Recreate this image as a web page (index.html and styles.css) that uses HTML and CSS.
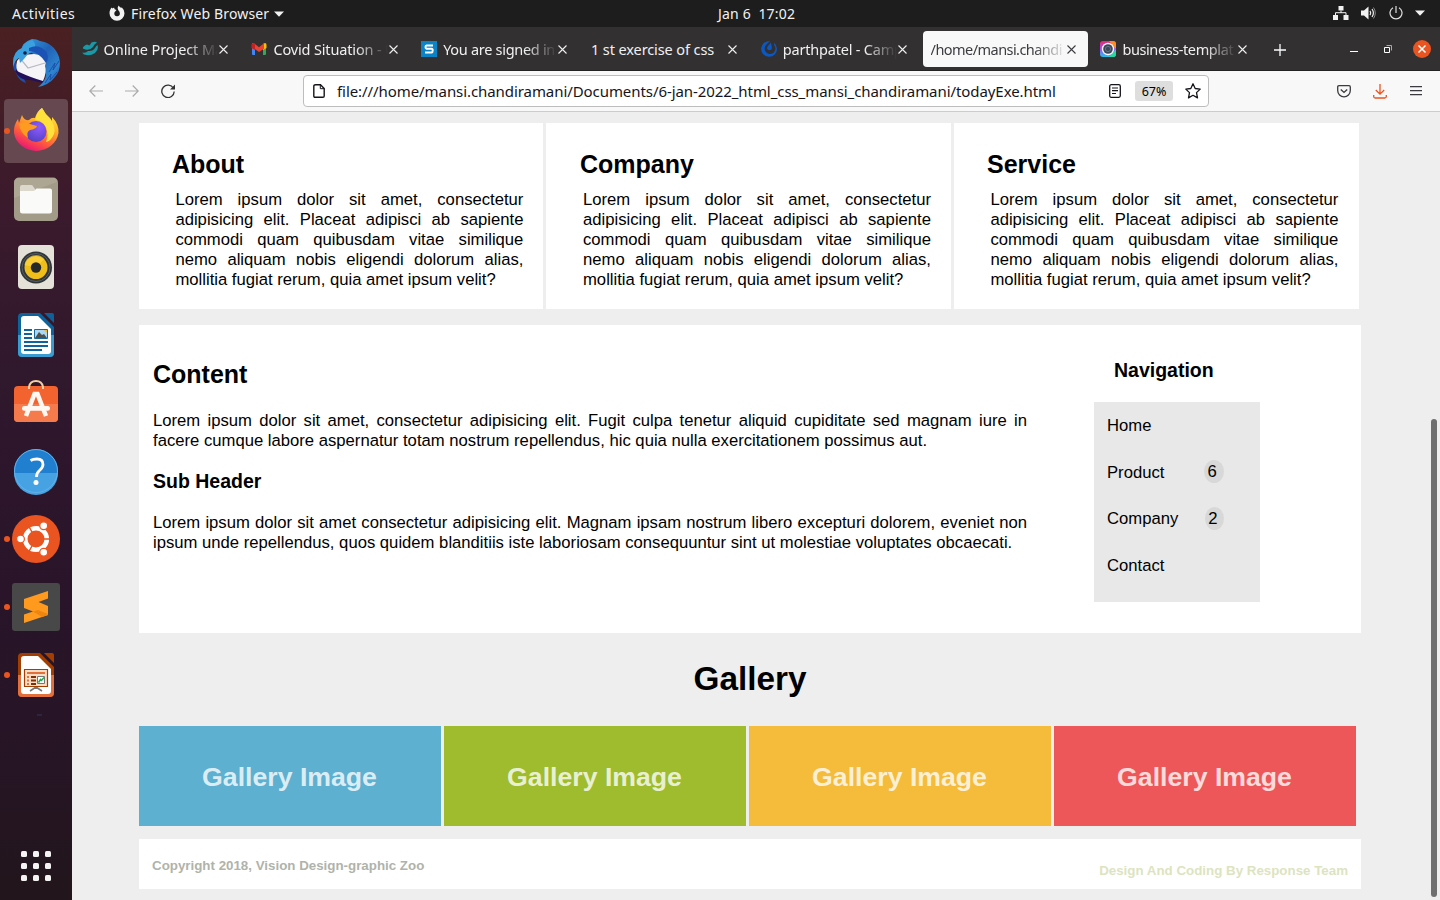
FILE: index.html
```html
<!DOCTYPE html>
<html lang="en">
<head>
<meta charset="utf-8">
<title>todayExe.html</title>
<link rel="stylesheet" href="styles.css">
</head>
<body>
<div class="desktop">
  <header class="topbar">
    <div class="topbar-left">
      <span class="t-activities">Activities</span>
      <svg class="ff-mono" width="16" height="16" viewBox="0 0 16 16"><path fill="#f2f2f2" fill-rule="evenodd" d="M1.200 4.800L2.400 2.400L3.200 3.400Q4.200 2.700 5.400 2.900Q4.900 4 6.200 4.600L7.500 4.900L6.400 6.200Q5.300 7 5.300 8.300A2.800 2.800 0 0 0 10.900 8.500Q10.900 6.500 9.300 5.200Q7.800 3.400 9.500 .6Q10.300 2 12.300 3L12.700 2.200Q15.600 4.900 15.500 8.300A7.500 7.500 0 0 1 .5 8.300Q.4 6.500 1.200 4.800Z"/></svg>
      <span class="t-app">Firefox Web Browser</span>
      <svg class="caret" width="10" height="6" viewBox="0 0 10 6"><path fill="#f2f2f2" d="M0 .5H10L5 5.700Z"/></svg>
    </div>
    <span class="t-clock">Jan 6&nbsp; 17:02</span>
    <div class="topbar-right">
      <svg width="16" height="14" viewBox="0 0 16 14"><path fill="#f2f2f2" d="M5.500 0h5v4.500h-5zM0 9h5v5H0zM10.500 9h5v5h-5z"/><path fill="none" stroke="#f2f2f2" d="M8 4.500V7M2.500 9.500V6.700h10.500v2.800"/></svg>
      <svg width="15" height="14" viewBox="0 0 15 14"><path fill="#f2f2f2" d="M0 4.500h3L7.500.5v13L3 9.500H0z"/><path fill="none" stroke="#f2f2f2" stroke-width="1.200" d="M9 4.800q1.500 2.200 0 4.400M11 3q2.800 4 0 8"/><path fill="none" stroke="#8a8a8a" d="M12.500 1.500q3.600 5.500 0 11"/></svg>
      <svg width="14" height="14" viewBox="0 0 14 14"><path fill="none" stroke="#e0e0e0" stroke-width="1.200" d="M7 0v7M4 1.700a6 6 0 1 0 6 0"/></svg>
      <svg width="10" height="6" viewBox="0 0 10 6"><path fill="#f2f2f2" d="M0 .5H10L5 5.700Z"/></svg>
    </div>
  </header>

  <div class="workspace">
    <nav class="dock">
      <div class="slot"><svg width="48" height="48" viewBox="0 0 48 48">
        <defs><linearGradient id="tb" x1="0" y1="0" x2="1" y2="1"><stop offset="0" stop-color="#38a3e4"/><stop offset=".45" stop-color="#2062b8"/><stop offset=".75" stop-color="#2e86cf"/><stop offset="1" stop-color="#263a9c"/></linearGradient></defs>
        <path fill="#1c4fae" d="M2 20Q-1 28 4 34Q7 42 14 44L10 36Z"/>
        <path fill="#241058" d="M3 32Q8 42 18 41Q28 43 32 45L30 38L6 30Z"/>
        <path fill="url(#tb)" d="M9 12Q10 3 20 0Q25 0 28 2Q42 4 47 18Q50 30 43 38Q37 46 26 48Q34 42 34 35Q29 20 20 14Q12 14 9 22Z"/>
        <path fill="#f5f5f7" d="M5 22L10 16L22 15L33 17Q35 20 33 27Q35 33 31 42Q20 39 7 33Q3 31 5 22Z"/>
        <path fill="none" stroke="#b9b9c2" stroke-width="1.200" d="M7 18L16 29L33 24"/>
        <path fill="#3aa0e0" d="M1 24Q1 12 10 9Q14 2 20 1Q24 3 23 11Q17 13 12 20L8 24L7 19Q3 21 1 28Z"/>
        <path fill="#1a53b5" d="M17 9Q28 4 35 14Q37 20 34 24Q26 12 17 12Z"/>
        <circle cx="13" cy="14" r="1.800" fill="#102246"/>
        <path fill="none" stroke="#1d4fab" d="M47 22l-6 9 2-7-6 9M45 33l-7 8 1-6-6 9"/>
      </svg></div>
      <div class="slot active"><i class="run"></i><svg width="48" height="48" viewBox="0 0 48 48">
        <defs><linearGradient id="f1" x1=".8" y1="0" x2=".3" y2="1"><stop offset="0" stop-color="#fff04a"/><stop offset=".35" stop-color="#ffb627"/><stop offset=".7" stop-color="#ff5a3c"/><stop offset="1" stop-color="#e8127a"/></linearGradient><radialGradient id="f2" cx=".65" cy=".3" r=".8"><stop offset="0" stop-color="#8f5bff"/><stop offset="1" stop-color="#4d3fbf"/></radialGradient></defs>
        <path fill="url(#f1)" d="M23 11Q25 4 30 1Q33 7 38 11L40 14L40 10Q47 17 46.500 26A22.500 21 0 0 1 2 26Q1.500 18 6 12L7 16L10 8Q12 14 17 13Q20 10 23 11Z"/>
        <path fill="#ffe03c" d="M23 13Q25 5 30 1Q33 7 39 13Q44 20 42 27Q39 34 34 35Q37 28 34 20Q31 14 23 13Z"/>
        <circle cx="24" cy="24.500" r="10.500" fill="url(#f2)"/>
        <path fill="#ff9b20" d="M7 17Q12 13 18 17L25 19Q24 22 18 23Q14 25 16 31Q8 26 7 17Z"/>
      </svg></div>
      <div class="slot"><svg width="48" height="48" viewBox="0 0 48 48"><rect x="2" y="2.500" width="44" height="43.500" rx="5" fill="#a29b88"/><path d="M7 3h34q4 0 4 4l-43 16V8q0-5 5-5z" fill="#b3ad9a" opacity=".6"/><path d="M8 12q0-2 2-2h9q2 0 2.500 2l1.500 2v6H8z" fill="#dcd8cc"/><path fill="#fafaf8" d="M8 16h14l2.500-2.500H38q2 0 2 2V36q0 2.500-2.500 2.500h-27Q8 38.500 8 36z"/></svg></div>
      <div class="slot"><svg width="48" height="48" viewBox="0 0 48 48"><rect x="6" y="2" width="36" height="44" rx="4" fill="#e4e1d8"/><circle cx="24" cy="24.500" r="16" fill="#303536"/><circle cx="24" cy="24.500" r="14" fill="none" stroke="#555d66"/><circle cx="24" cy="24.500" r="11.500" fill="#f0be19"/><path d="M24 24.500L12.500 22a11.500 11.500 0 0 1 20-6z" fill="#ffd84a" opacity=".6"/><circle cx="24" cy="24.500" r="5.200" fill="#26292a"/></svg></div>
      <div class="slot"><svg width="48" height="48" viewBox="0 0 48 48"><path fill="#0e639d" d="M10 2H28L42 16V42a4 4 0 0 1-4 4H10a4 4 0 0 1-4-4V6a4 4 0 0 1 4-4z"/><path fill="#3a9bd0" d="M6 24H42V42a4 4 0 0 1-4 4H10a4 4 0 0 1-4-4z"/><path fill="#fff" d="M12 5H26L39 18V40q0 3-3 3H12q-3 0-3-3V8q0-3 3-3z"/><path fill="#0f5f99" d="M32 2h8q2 0 2 2v8z"/><path stroke="#0e639d" stroke-width="2" d="M12 19h8M12 23h8M12 27h8M12 31h24M12 35h24M12 39h18"/><path fill="#a8d8f4" stroke="#17689c" d="M22.500 18.500h13v9h-13z"/><path fill="#504f49" d="M23 27l4-6 3 3 2-1 3 4z"/><path fill="#f5b92f" d="M32 19h3v3z"/></svg></div>
      <div class="slot"><svg width="48" height="48" viewBox="0 0 48 48"><rect x="2" y="7" width="44" height="36" rx="4" fill="#f2632f"/><path d="M2 25h44v14q0 4-4 4H6q-4 0-4-4z" fill="#f57a4c"/><path fill="none" stroke="#f3d0a4" stroke-width="2" d="M17 10V8q1-6 7-6t7 6v2"/><path fill="none" stroke="#fff8f2" stroke-width="4.500" d="M14 37L22.500 15h3L34 37"/><rect x="10" y="27" width="28" height="4.800" rx="2.200" fill="#fff8f2"/></svg></div>
      <div class="slot"><svg width="48" height="48" viewBox="0 0 48 48"><circle cx="24" cy="24" r="22" fill="#207fcf"/><path fill="#46a2e2" d="M2 26A22 22 0 0 0 46 26Z"/><circle cx="24" cy="24" r="21.500" fill="none" stroke="#63b1e8"/><path fill="none" stroke="#fff" stroke-width="2.800" d="M18.500 13.500Q21 12 25 12Q31 12 31 17.500Q31 20.500 27.500 23.500Q24.500 26 24.500 30"/><circle cx="24" cy="35.500" r="2.500" fill="#fff"/></svg></div>
      <div class="slot"><i class="run"></i><svg width="48" height="48" viewBox="0 0 48 48"><circle cx="24" cy="24" r="24" fill="#e95420"/><circle cx="24" cy="24" r="10.800" fill="none" stroke="#fff" stroke-width="4.600"/><path stroke="#e95420" stroke-width="1.500" d="M32 24h7M20 17l-4-7M20 31l-4 7"/><g fill="#fff" stroke="#e95420" stroke-width="1.200"><circle cx="8.500" cy="24" r="3.900"/><circle cx="31.700" cy="10.700" r="3.900"/><circle cx="31.700" cy="37.300" r="3.900"/></g></svg></div>
      <div class="slot"><i class="run"></i><svg width="48" height="48" viewBox="0 0 48 48"><rect width="48" height="48" rx="3" fill="#484848"/><path fill="#ff9a1e" d="M12 16L36 8V15.500L26.500 19L36 23V32L12 40V31.500L21 28.500L12 25Z"/><path fill="#ee850f" d="M21 28.500L26 27L36 31V32L30 34Z"/></svg></div>
      <div class="slot"><i class="run"></i><svg width="48" height="48" viewBox="0 0 48 48"><path fill="#a33e03" d="M10 2H28L42 16V42a4 4 0 0 1-4 4H10a4 4 0 0 1-4-4V6a4 4 0 0 1 4-4z"/><path fill="#e2703c" d="M6 24H42V42a4 4 0 0 1-4 4H10a4 4 0 0 1-4-4z"/><path fill="#fff" d="M12 5H26L39 18V40q0 3-3 3H12q-3 0-3-3V8q0-3 3-3z"/><path fill="#a33e03" d="M32 2h8q2 0 2 2v8z"/><path fill="none" stroke="#777" stroke-width="1.600" d="M18 40l6-4 6 4M24 36v2"/><path fill="#fbdcc5" stroke="#a33e03" stroke-width="1.200" d="M12.500 18.500h23v17h-23z"/><path stroke="#e2703c" stroke-width="2" d="M15 22h18"/><path stroke="#d9773f" stroke-width="2" stroke-dasharray="2 1.500" d="M16 25v9"/><path stroke="#812f05" stroke-width="2" d="M19 26h5M19 29.500h5M19 33h5"/><path fill="#fff" stroke="#777" d="M25.500 25.500h7v7h-7z"/><path fill="none" stroke="#1fae4b" stroke-width="1.500" d="M26.500 31.500l2-3 1 1 2.500-3"/></svg></div>
      <i class="dock-mark"></i>
      <div class="apps"><i></i><i></i><i></i><i></i><i></i><i></i><i></i><i></i><i></i></div>
    </nav>

    <main class="browser">
      <div class="tabstrip">
        <div class="tab"><svg class="fav" width="16" height="16" viewBox="0 0 16 16"><path fill="#1b98a6" d="M.8 7.500Q1 5 5 3.500L7.500 4.500L9.500 1.500Q13 0 15 1.500Q12 3 11 6Q8 9.500 3.500 8.500Q2 8 .8 7.500ZM15.500 4Q17 9 13 12Q8 15.500 2 13.500L0 11.500Q4 12.500 6 10Q11 10.500 13 7Q14 5 15.500 4Z"/></svg><span class="tt w1">Online Project Ma</span><svg class="x" width="9" height="9" viewBox="0 0 9 9"><path d="M.5.5l8 8M8.500.5l-8 8"/></svg></div>
        <div class="tab"><svg class="fav" width="16" height="16" viewBox="0 0 16 16"><path fill="#4285f4" d="M1 3h3v11H2q-1 0-1-1z"/><path fill="#34a853" d="M12 5h3v8q0 1-1 1h-2z"/><path fill="#fbbc04" d="M12 3l2-1q1.500 0 1.500 2v3L12 9z"/><path fill="#ea4335" d="M.8 3.500Q1 1.500 3 2.200L8 6.200 13 2.200V7.800L8 11 3.500 7.800V9L.8 7z"/><path fill="#c5221f" d="M.8 3.500Q1 2 2.500 2L4 3.500V9L.8 7z"/></svg><span class="tt w2">Covid Situation - U</span><svg class="x" width="9" height="9" viewBox="0 0 9 9"><path d="M.5.5l8 8M8.500.5l-8 8"/></svg></div>
        <div class="tab"><svg class="fav" width="16" height="16" viewBox="0 0 16 16"><path fill="#0a84c6" d="M0 0h16v16H0z"/><path fill="none" stroke="#fff" stroke-width="2" d="M12 4.500H5.500Q4.500 4.500 4.500 6T5.500 7.700H10.500Q11.700 7.700 11.700 9.500T10.500 11.500H4"/></svg><span class="tt w3">You are signed in</span><svg class="x" width="9" height="9" viewBox="0 0 9 9"><path d="M.5.5l8 8M8.500.5l-8 8"/></svg></div>
        <div class="tab"><span class="tt w4 full">1 st exercise of css</span><svg class="x" width="9" height="9" viewBox="0 0 9 9"><path d="M.5.5l8 8M8.500.5l-8 8"/></svg></div>
        <div class="tab"><svg class="fav" width="16" height="16" viewBox="0 0 16 16"><path fill="#0b58c4" fill-rule="evenodd" d="M9 0Q6 0 3.500 1.500A7.900 7.900 0 1 0 13 1.800L13.200 4.200A5.400 5.400 0 1 1 5.200 3.800Z"/><path fill="#0b58c4" d="M9.800 1.500L10.800 6Q11.300 9 8.600 9.200Q6 9 6.100 6.700Q6.200 5.800 9.800 1.500Z"/></svg><span class="tt w5">parthpatel - Camp</span><svg class="x" width="9" height="9" viewBox="0 0 9 9"><path d="M.5.5l8 8M8.500.5l-8 8"/></svg></div>
        <div class="tab current"><span class="tt w6">/home/mansi.chandi</span><svg class="x" width="9" height="9" viewBox="0 0 9 9"><path d="M.5.5l8 8M8.500.5l-8 8"/></svg></div>
        <div class="tab"><svg class="fav" width="16" height="16" viewBox="0 0 16 16"><defs><linearGradient id="ig" x1=".5" y1="0" x2=".5" y2="1"><stop offset="0" stop-color="#ee2a6b"/><stop offset=".5" stop-color="#a04cf6"/><stop offset="1" stop-color="#22c5ea"/></linearGradient></defs><rect width="16" height="16" rx="3" fill="url(#ig)"/><path fill="#ff8b22" d="M9 0h4q3 0 3 3v5z"/><path fill="#27d9a0" d="M16 8v5q0 3-3 3H9z"/><circle cx="8" cy="8" r="6.200" fill="#f7f7f7"/><circle cx="8" cy="8" r="4.800" fill="#3c4858"/><circle cx="8" cy="8" r="2.600" fill="none" stroke="#64748b"/></svg><span class="tt w7">business-templat</span><svg class="x" width="9" height="9" viewBox="0 0 9 9"><path d="M.5.5l8 8M8.500.5l-8 8"/></svg></div>
        <svg class="newtab" width="12" height="12" viewBox="0 0 12 12"><path stroke="#fbfbfe" stroke-width="1.300" d="M6 0v12M0 6h12"/></svg>
        <div class="winbtns">
          <svg width="8" height="9" viewBox="0 0 8 9"><path stroke="#fff" stroke-width="1" d="M0 6.500h8"/></svg>
          <svg width="8" height="8" viewBox="0 0 8 8"><path fill="none" stroke="#fff" d="M.5 2.500h5v5h-5z"/><path fill="none" stroke="#aaa" d="M2.500.5h5v5"/></svg>
          <svg width="18" height="18" viewBox="0 0 18 18"><circle cx="9" cy="9" r="9" fill="#e95420"/><path stroke="#fff" stroke-width="1.500" d="M5.500 5.500l7 7M12.500 5.500l-7 7"/></svg>
        </div>
      </div>

      <div class="toolbar">
        <svg class="back" width="14" height="12" viewBox="0 0 14 12"><path fill="none" stroke="#ababab" stroke-width="1.200" d="M14 6H.8M6.300.5L.8 6l5.500 5.500"/></svg>
        <svg class="fwd" width="14" height="12" viewBox="0 0 14 12"><path fill="none" stroke="#ababab" stroke-width="1.200" d="M0 6h13.200M7.700.5L13.200 6l-5.500 5.500"/></svg>
        <svg class="reload" width="14" height="14" viewBox="0 0 14 14"><path fill="none" stroke="#333" stroke-width="1.300" d="M12.400 4.300A6.200 6.200 0 1 0 13.200 7.500"/><path fill="#333" d="M14 .5v5H9z"/></svg>
        <div class="urlbar">
          <svg class="doc" width="12" height="14" viewBox="0 0 12 14"><path fill="none" stroke="#15141a" stroke-width="1.400" d="M2.500.8H7.500L11.200 4.500V12q0 1.200-1.200 1.200H2Q.8 13.200.8 12V2.200Q.8.800 2.500.8Z"/><path fill="none" stroke="#15141a" d="M7.300.8V4.700H11.200"/></svg>
          <span class="url">file:///home/mansi.chandiramani/Documents/6-jan-2022_html_css_mansi_chandiramani/todayExe.html</span>
          <svg class="reader" width="12" height="14" viewBox="0 0 12 14"><rect x=".7" y=".7" width="10.600" height="12.600" rx="1.500" fill="none" stroke="#15141a" stroke-width="1.300"/><path stroke="#15141a" stroke-width="1.200" d="M3 4h6M3 6.700h6M3 9.500h4"/></svg>
          <span class="zoom">67%</span>
          <svg class="star" width="16" height="16" viewBox="0 0 16 16"><path fill="none" stroke="#15141a" stroke-width="1.300" stroke-linejoin="round" d="M8 .8L10.200 5.500L15.200 6.100L11.500 9.600L12.500 14.900L8 12.300L3.500 14.900L4.500 9.600L.8 6.100L5.800 5.500Z"/></svg>
        </div>
        <svg class="pocket" width="14" height="13" viewBox="0 0 14 13"><path fill="none" stroke="#3a3a3f" stroke-width="1.300" d="M2 .7H12Q13.300.7 13.300 2V5.500A6.300 6.300 0 0 1 .7 5.500V2Q.7.700 2 .7Z"/><path fill="none" stroke="#3a3a3f" stroke-width="1.400" d="M3.800 4.400L7 7.400L10.200 4.400"/></svg>
        <svg class="dl" width="14" height="15" viewBox="0 0 14 15"><path fill="none" stroke="#e95420" stroke-width="1.300" d="M7 0v10M2.800 6L7 10.200L11.200 6M.7 11V12.500Q.7 14 2.200 14H11.800Q13.300 14 13.300 12.500V11"/></svg>
        <svg class="menu" width="12" height="10" viewBox="0 0 12 10"><path fill="#3a3a3f" d="M0 0h12v1.200H0zM0 4h12v1.200H0zM0 8h12v1.200H0z"/></svg>
      </div>

      <div class="page">
        <section class="cards">
          <article class="card"><h2>About</h2><p>Lorem ipsum dolor sit amet, consectetur adipisicing elit. Placeat adipisci ab sapiente commodi quam quibusdam vitae similique nemo aliquam nobis eligendi dolorum alias, mollitia fugiat rerum, quia amet ipsum velit?</p></article>
          <article class="card mid"><h2>Company</h2><p>Lorem ipsum dolor sit amet, consectetur adipisicing elit. Placeat adipisci ab sapiente commodi quam quibusdam vitae similique nemo aliquam nobis eligendi dolorum alias, mollitia fugiat rerum, quia amet ipsum velit?</p></article>
          <article class="card"><h2>Service</h2><p>Lorem ipsum dolor sit amet, consectetur adipisicing elit. Placeat adipisci ab sapiente commodi quam quibusdam vitae similique nemo aliquam nobis eligendi dolorum alias, mollitia fugiat rerum, quia amet ipsum velit?</p></article>
        </section>
        <section class="content">
          <div class="copy">
            <h2>Content</h2>
            <p>Lorem ipsum dolor sit amet, consectetur adipisicing elit. Fugit culpa tenetur aliquid cupiditate sed magnam iure in facere cumque labore aspernatur totam nostrum repellendus, hic quia nulla exercitationem possimus aut.</p>
            <h3>Sub Header</h3>
            <p>Lorem ipsum dolor sit amet consectetur adipisicing elit. Magnam ipsam nostrum libero excepturi dolorem, eveniet non ipsum unde repellendus, quos quidem blanditiis iste laboriosam consequuntur sint ut molestiae voluptates obcaecati.</p>
          </div>
          <aside class="side">
            <h3>Navigation</h3>
            <ul class="links">
              <li>Home</li>
              <li>Product<span class="badge">6</span></li>
              <li>Company<span class="badge small">2</span></li>
              <li>Contact</li>
            </ul>
          </aside>
        </section>
        <h1>Gallery</h1>
        <section class="gallery">
          <div class="tile blue">Gallery Image</div>
          <div class="tile green">Gallery Image</div>
          <div class="tile yellow">Gallery Image</div>
          <div class="tile red">Gallery Image</div>
        </section>
        <footer class="foot"><span class="copyright">Copyright 2018, Vision Design-graphic Zoo</span><span class="credit">Design And Coding By Response Team</span></footer>
        <div class="scrollthumb"></div>
      </div>
    </main>
  </div>
</div>
</body>
</html>
```

FILE: styles.css
```css
* { box-sizing: border-box; }
body { margin: 0; overflow: hidden; font-family: "Noto Sans", "Open Sans", sans-serif; }
h1, h2, h3, p, ul { margin: 0; padding: 0; }
ul { list-style: none; }
svg { display: block; flex: none; }
.desktop { width: 1440px; height: 900px; display: flex; flex-direction: column; }

/* system bar */
.topbar { height: 27px; background: #1d1d1d; color: #f2f2f2; font-size: 14px; line-height: 27px; display: grid; grid-template-columns: 718px 1fr auto; white-space: nowrap; }
.topbar-left { display: flex; align-items: center; padding-left: 12px; }
.t-activities { width: 97px; letter-spacing: .5px; }
.t-app { margin-left: 6px; width: 138px; letter-spacing: .15px; }
.t-clock { letter-spacing: .17px; }
.ff-mono { margin-top: -2px; }
.caret { margin-left: 5px; }
.topbar-right { display: flex; align-items: center; gap: 12.5px; padding: 0 15px 2px 0; }

/* launcher */
.workspace { flex: 1; display: flex; min-height: 0; }
.dock { width: 72px; padding: 4px 4px 19px; display: flex; flex-direction: column; gap: 4px; background: linear-gradient(#4a2022 0%, #3b1a2c 20%, #30182d 40%, #291429 65%, #261525 85%, #22151b 100%); }
.slot { height: 64px; border-radius: 4px; display: flex; align-items: center; justify-content: center; position: relative; }
.slot.active { background: #654850; }
.run { position: absolute; left: 0; top: 29px; width: 6px; height: 6px; border-radius: 50%; background: #e95420; }
.dock-mark { width: 5px; height: 2px; margin: 3px 0 0 33px; background: #2f2440; }
.apps { margin: auto auto 0; display: grid; grid-template-columns: repeat(3, 6px); gap: 6px; }
.apps i { height: 6px; border-radius: 1.5px; background: #f4f2f2; }

/* browser chrome */
.browser { flex: 1; min-width: 0; display: flex; flex-direction: column; }
.tabstrip { height: 44px; background: #333031; border-bottom: 1px solid #222; display: flex; align-items: flex-start; padding: 4px 9px 0 1.6px; color: #f0f0f0; }
.tab { width: 169.8px; height: 36px; padding: 0 15.6px 0 8px; display: flex; align-items: center; font-size: 14.5px; line-height: 36px; border-radius: 4px; }
.tab.current { width: 165px; margin-right: 4.8px; padding-right: 11.4px; background: #f8f8f8; color: #3c3c40; }
.fav { margin-right: 6px; }
.tt { flex: 1; min-width: 0; overflow: hidden; white-space: nowrap; -webkit-mask-image: linear-gradient(to left, transparent 0, #000 32px); mask-image: linear-gradient(to left, transparent 0, #000 32px); }
.tt.full { -webkit-mask-image: none; mask-image: none; }
.w1 { letter-spacing: -.1px; }
.w2 { letter-spacing: -.15px; }
.w3 { letter-spacing: -.3px; }
.w4 { letter-spacing: -.1px; }
.w5 { letter-spacing: -.2px; }
.w6 { letter-spacing: -.55px; }
.w7 { letter-spacing: -.4px; }
.x { fill: none; stroke: currentColor; stroke-width: 1.1; margin-left: 1px; }
.newtab { margin: 13px 0 0 11.4px; }
.winbtns { margin-left: auto; display: flex; align-items: center; gap: 21px; height: 36px; }
.winbtns svg:first-child { margin-right: 5px; }

.toolbar { height: 41px; background: #f8f8f8; border-bottom: 1px solid #ccc; display: flex; align-items: center; padding: 0 18px 0 17px; }
.fwd { margin-left: 22px; }
.reload { margin-left: 22px; }
.urlbar { width: 906px; height: 32px; margin: 0 128px 0 128px; border: 1px solid #bdbdbd; border-radius: 4px; background: #fff; display: flex; align-items: center; padding: 0 7px 0 9px; }
.url { margin-left: 12px; width: 772px; font-size: 15px; letter-spacing: -.073px; color: #15141a; white-space: nowrap; }
.zoom { width: 38px; height: 20px; margin: 0 12px 0 14px; border-radius: 3px; background: #dedede; font-size: 12.5px; line-height: 21px; text-align: center; color: #000; }
.dl { margin-left: 22px; }
.menu { margin-left: 23px; }

/* web page */
.page { flex: 1; background: #eee; padding: 11px 79px 0 67px; position: relative; font-family: "Liberation Sans", Arial, sans-serif; font-size: 16.67px; line-height: 20px; color: #000; }
.cards { display: grid; grid-template-columns: 404px 405px 405px; gap: 3px; }
.card { height: 186px; background: #fff; padding: 27px 20px 0 33px; }
.card.mid { padding-left: 34px; }
h2 { font-size: 25px; line-height: 29px; }
h3 { font-size: 19.5px; line-height: 22px; }
.card p { margin: 11px 0 0 3.4px; text-align: justify; width: 348px; }
.card.mid p { margin-left: 3px; }
.content { height: 308px; margin-top: 16px; background: #fff; display: flex; }
.copy { width: 888px; padding: 35px 0 0 14px; }
.copy p { text-align: justify; }
.copy h2 { margin-bottom: 22px; }
.copy h3 { margin: 19px 0 21px; }
.side { margin-left: 67px; padding-top: 34px; }
.side h3 { padding-left: 20px; }
.links { width: 166px; height: 200px; margin-top: 21px; padding: 14px 36px 0 13px; background: #e8e8e8; }
.links li { height: 46.7px; display: flex; justify-content: space-between; align-items: flex-start; }
.badge { width: 20px; height: 23px; line-height: 24px; margin-top: -2.5px; padding-left: 3.6px; border-radius: 50%; background: #d8d8d8; }
.badge.small { width: 19px; line-height: 23px; margin-top: -2px; padding-left: 3.3px; }
h1 { font-size: 33.3px; line-height: 38px; margin-top: 27px; text-align: center; }
.gallery { margin-top: 28px; display: grid; grid-template-columns: repeat(4, 302px); gap: 3px; }
.tile { height: 100px; padding-right: 1px; line-height: 102px; text-align: center; font-size: 26.67px; font-weight: bold; color: rgba(255, 255, 255, .8); }
.blue { background: #5eb0d0; }
.green { background: #9ebc2e; }
.yellow { background: #f5bc3b; }
.red { background: #ee575a; }
.foot { height: 50px; margin-top: 13px; background: #fff; padding: 17px 13px 0; display: flex; justify-content: space-between; font-size: 13.33px; font-weight: bold; }
.copyright { color: #b0b3aa; }
.credit { margin-top: 5px; color: #dce4bf; }
.scrollthumb { position: absolute; right: 3px; top: 307px; width: 6px; height: 478px; border-radius: 3px; background: #6f6f6f; }
```
